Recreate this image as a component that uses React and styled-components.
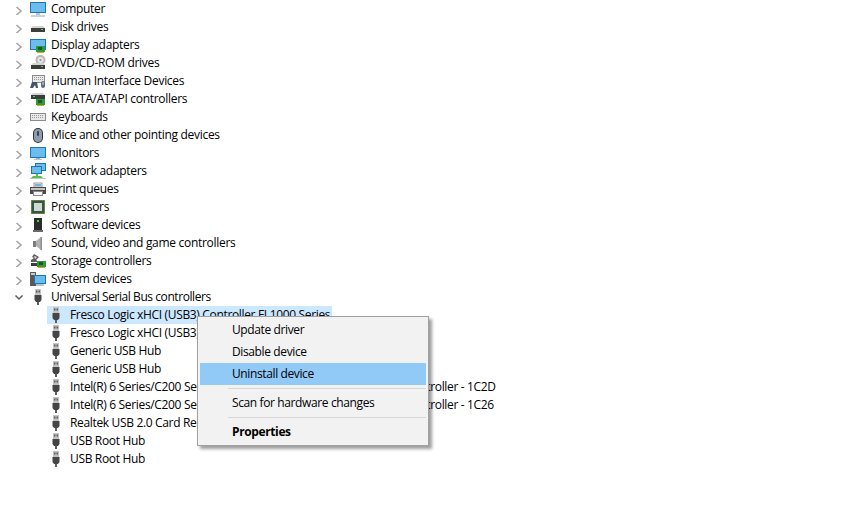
import React from 'react';
import styled, { createGlobalStyle } from 'styled-components';

const GlobalStyle = createGlobalStyle`
  html, body {
    margin: 0;
    padding: 0;
    background: #fff;
  }
  body {
    font-family: "Open Sans", "Noto Sans", "Liberation Sans", sans-serif;
    font-size: 12px;
    color: #000;
  }
`;

const Page = styled.div`
  position: relative;
  width: 848px;
  height: 517px;
  overflow: hidden;
`;

const Tree = styled.ul`
  list-style: none;
  margin: 0;
  padding: 0;
`;

const CategoryRow = styled.li`
  display: flex;
  align-items: center;
  height: 18px;
  padding-left: 12px;
`;

const Toggle = styled.svg`
  width: 12px;
  height: 12px;
  flex: none;
  margin-right: 6px;
`;

const IconBox = styled.svg`
  width: 16px;
  height: 16px;
  flex: none;
`;

const CategoryLabel = styled.span`
  margin-left: 5px;
  padding-bottom: 2px;
  white-space: nowrap;
  letter-spacing: ${p => (p.$tight ? '-0.43px' : '-0.3px')};
`;

const DeviceList = styled.ul`
  list-style: none;
  margin: 0;
  padding: 0 0 0 47px;
`;

const DeviceRow = styled.li`
  display: flex;
  align-items: center;
  width: ${p => (p.$selected ? '285px' : 'auto')};
  height: 18px;
  padding-left: 1px;
  box-sizing: border-box;
  background: ${p => (p.$selected ? '#cce8ff' : 'transparent')};
`;

const DeviceLabel = styled.span`
  margin-left: 6px;
  padding-bottom: 2px;
  white-space: nowrap;
  letter-spacing: -0.34px;
`;

const Menu = styled.div`
  position: absolute;
  left: 197px;
  top: 316px;
  width: 232px;
  height: 130px;
  box-sizing: border-box;
  padding: 2px;
  background: #f2f2f2;
  border: 1px solid #a0a0a0;
  box-shadow: 3px 3px 3px rgba(0, 0, 0, 0.38);
`;

const MenuItem = styled.div`
  display: flex;
  align-items: center;
  height: 22px;
  padding: 0 0 2px 32px;
  box-sizing: border-box;
  background: ${p => (p.$active ? '#91c9f7' : 'transparent')};
  font-weight: ${p => (p.$bold ? 700 : 400)};
  letter-spacing: -0.38px;
  white-space: nowrap;
`;

const MenuSeparator = styled.div`
  height: 1px;
  margin: 3px 0 3px 28px;
  background: #d7d7d7;
`;

const Chevron = ({ open }) => (
  <Toggle viewBox="0 0 12 12">
    {open ? (
      <path d="M3.5 4.5 L7 8 L10.5 4.5" fill="none" stroke="#5c5c5c" strokeWidth="1.5" />
    ) : (
      <path d="M4.5 4 L9 8 L4.5 12" fill="none" stroke="#a6a6a6" strokeWidth="1.6" />
    )}
  </Toggle>
);

const Screen = ({ x = 0, y = 2, w = 16, h = 10 }) => (
  <>
    <rect x={x} y={y} width={w} height={h} fill="#1878b8" />
    <rect x={x + 1} y={y + 1} width={w - 2} height={h - 2} fill="#6dbdec" />
  </>
);

const Board = ({ x = 6, y = 9 }) => (
  <>
    <rect x={x} y={y} width="9" height="6" fill="#2f9a3c" />
    <rect x={x + 2} y={y + 1} width="4" height="3" fill="#1b5a26" />
    <rect x={x + 1} y={y + 6} width="7" height="1" fill="#d9a520" />
  </>
);

const Drive = ({ y = 7 }) => (
  <>
    <path d={`M3 ${y} H13 L15 ${y + 2} H1 Z`} fill="#d5d5d5" />
    <rect x="1" y={y + 2} width="14" height="4" fill="#3c3c3c" />
    <rect x="11" y={y + 3} width="2" height="1" fill="#4fd24f" />
  </>
);

const Keys = ({ x = 1, y = 5, w = 14, h = 7 }) => (
  <>
    <rect x={x} y={y} width={w} height={h} fill="#8c8c8c" />
    <rect x={x + 1} y={y + 1} width={w - 2} height={h - 2} fill="#e8e8e8" />
    <path
      d={`M${x + 2} ${y + 2.5} H${x + w - 2} M${x + 2} ${y + 4.5} H${x + w - 2}`}
      stroke="#9a9a9a"
      strokeDasharray="1 1"
    />
  </>
);

const UsbPlug = () => (
  <>
    <rect x="5" y="0" width="6" height="6" fill="#c2c2c2" />
    <rect x="6" y="1.5" width="1.5" height="2" fill="#5a5a5a" />
    <rect x="8.5" y="1.5" width="1.5" height="2" fill="#5a5a5a" />
    <path d="M4.5 6 H11.5 V11 L10 13 H6 L4.5 11 Z" fill="#454545" />
    <rect x="7" y="13" width="2" height="3" fill="#5e5e5e" />
  </>
);

const drawings = {
  computer: (
    <>
      <Screen y={1} h={11} />
      <rect x="6" y="12" width="4" height="2" fill="#b9c7d2" />
      <rect x="1" y="14" width="14" height="2" fill="#c9d3db" />
    </>
  ),
  disk: <Drive />,
  display: (
    <>
      <Screen y={2} h={11} />
      <Board />
    </>
  ),
  dvd: (
    <>
      <circle cx="10.5" cy="5" r="5" fill="#b8b8b8" />
      <circle cx="10.5" cy="5" r="3" fill="#e6e6e6" />
      <circle cx="10.5" cy="5" r="1" fill="#8e8e8e" />
      <Drive y={8} />
    </>
  ),
  hid: (
    <>
      <Keys x={2} y={2} w={13} h={8} />
      <path d="M0 15 L2 9 H7 L8 15 H6 L5 12 L3 15 Z" fill="#44546a" />
      <rect x="11" y="8" width="4" height="7" rx="2" fill="#5a6b80" />
      <rect x="12.5" y="9" width="1" height="3" fill="#d7dee6" />
    </>
  ),
  ide: (
    <>
      <path d="M3 2 H13 L15 4 H1 Z" fill="#d5d5d5" />
      <rect x="1" y="4" width="14" height="4" fill="#3c3c3c" />
      <rect x="3" y="5" width="2" height="1" fill="#4fd24f" />
      <Board y={8} />
    </>
  ),
  keyboard: <Keys x={0} y={4} w={16} h={8} />,
  mouse: (
    <>
      <rect x="3" y="1" width="10" height="15" rx="5" fill="#2f343c" />
      <rect x="4" y="2" width="8" height="13" rx="4" fill="#8f9cac" />
      <rect x="7" y="4" width="2" height="5" rx="1" fill="#3d4249" />
    </>
  ),
  monitor: (
    <>
      <Screen y={2} h={11} />
      <rect x="6" y="13" width="4" height="1" fill="#9fb4c4" />
      <rect x="4" y="14" width="8" height="1" fill="#b8c6d1" />
    </>
  ),
  network: (
    <>
      <Screen x={5} y={0} w={11} h={8} />
      <Screen x={1} y={3} w={11} h={8} />
      <path d="M6 11 H8 V13 H11 L13 15 H1 L3 13 H6 Z" fill="#56c04f" />
      <rect x="0" y="15" width="16" height="1" fill="#c5c5c5" />
    </>
  ),
  print: (
    <>
      <rect x="4" y="2" width="8" height="4" fill="#f4f4f4" stroke="#9a9a9a" />
      <rect x="5" y="3" width="6" height="2" fill="#6db5e0" />
      <rect x="0" y="6" width="16" height="7" fill="#4a4a4a" />
      <rect x="1" y="7" width="14" height="2" fill="#c4c4c4" />
      <rect x="3.5" y="10.5" width="9" height="4" fill="#f7f7f7" stroke="#8a8a8a" />
    </>
  ),
  cpu: (
    <>
      <rect x="1" y="1" width="14" height="14" fill="#b99a3a" />
      <rect x="1.5" y="1.5" width="13" height="13" fill="#2f5a48" />
      <rect x="4" y="4" width="8" height="8" fill="#d4d8d4" />
    </>
  ),
  software: (
    <>
      <rect x="4" y="1" width="8" height="12" fill="#2b2b2b" />
      <rect x="7" y="3" width="2" height="2" fill="#43d64c" />
      <rect x="3" y="13" width="10" height="2" fill="#6a6a6a" />
    </>
  ),
  sound: (
    <>
      <rect x="3" y="6" width="3" height="6" fill="#7d7d7d" />
      <path d="M6 6 L11 2 V15 L6 11 Z" fill="#b2b2b2" />
      <rect x="10.5" y="2" width="1.5" height="13" fill="#8f8f8f" />
    </>
  ),
  storage: (
    <>
      <path d="M4 1 L9 4 L6 7 L9 9 H1 V7 L4 5 L2 4 Z" fill="#5d5d5d" />
      <path d="M4 3 L7 4 L5 6 Z" fill="#e4e4e4" />
      <rect x="1" y="10" width="6" height="3" fill="#3c3c3c" />
      <Board x={7} y={8} />
    </>
  ),
  system: (
    <>
      <rect x="0" y="1" width="6" height="14" fill="#595959" />
      <rect x="1" y="2" width="4" height="2" fill="#c9c9c9" />
      <Screen x={4} y={4} w={12} h={9} />
      <rect x="6" y="13" width="8" height="2" fill="#b5c4cf" />
    </>
  ),
  usb: <UsbPlug />,
};

const Icon = ({ name }) => <IconBox viewBox="0 0 16 16">{drawings[name]}</IconBox>;

const categories = [
  ['computer', 'Computer'],
  ['disk', 'Disk drives'],
  ['display', 'Display adapters'],
  ['dvd', 'DVD/CD-ROM drives'],
  ['hid', 'Human Interface Devices'],
  ['ide', 'IDE ATA/ATAPI controllers'],
  ['keyboard', 'Keyboards'],
  ['mouse', 'Mice and other pointing devices'],
  ['monitor', 'Monitors'],
  ['network', 'Network adapters'],
  ['print', 'Print queues'],
  ['cpu', 'Processors'],
  ['software', 'Software devices'],
  ['sound', 'Sound, video and game controllers'],
  ['storage', 'Storage controllers'],
  ['system', 'System devices'],
];

const devices = [
  'Fresco Logic xHCI (USB3) Controller FL1000 Series',
  'Fresco Logic xHCI (USB3) Controller FL1000 Series',
  'Generic USB Hub',
  'Generic USB Hub',
  'Intel(R) 6 Series/C200 Series Chipset Family USB Enhanced Host Controller - 1C2D',
  'Intel(R) 6 Series/C200 Series Chipset Family USB Enhanced Host Controller - 1C26',
  'Realtek USB 2.0 Card Reader',
  'USB Root Hub',
  'USB Root Hub',
];

export default function App() {
  return (
    <Page>
      <GlobalStyle />
      <Tree>
        {categories.map(([icon, label]) => (
          <CategoryRow key={label}>
            <Chevron />
            <Icon name={icon} />
            <CategoryLabel>{label}</CategoryLabel>
          </CategoryRow>
        ))}
        <CategoryRow>
          <Chevron open />
          <Icon name="usb" />
          <CategoryLabel $tight>Universal Serial Bus controllers</CategoryLabel>
        </CategoryRow>
      </Tree>
      <DeviceList>
        {devices.map((label, i) => (
          <DeviceRow key={i} $selected={i === 0}>
            <Icon name="usb" />
            <DeviceLabel>{label}</DeviceLabel>
          </DeviceRow>
        ))}
      </DeviceList>
      <Menu>
        <MenuItem>Update driver</MenuItem>
        <MenuItem>Disable device</MenuItem>
        <MenuItem $active>Uninstall device</MenuItem>
        <MenuSeparator />
        <MenuItem>Scan for hardware changes</MenuItem>
        <MenuSeparator />
        <MenuItem $bold>Properties</MenuItem>
      </Menu>
    </Page>
  );
}
